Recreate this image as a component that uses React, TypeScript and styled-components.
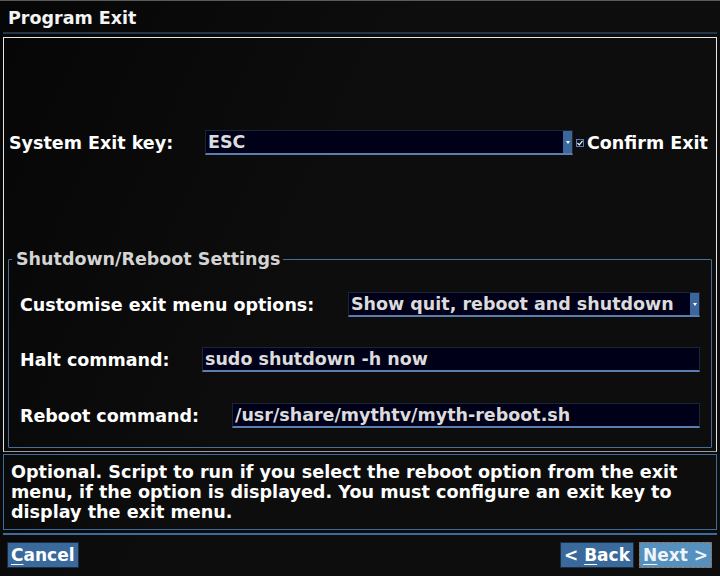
import React from 'react'
import styled, { createGlobalStyle } from 'styled-components'

const GlobalStyle = createGlobalStyle`
  html, body {
    margin: 0;
    padding: 0;
    background: #0b0b0b;
  }
  * {
    box-sizing: border-box;
  }
`

const Screen = styled.div`
  width: 720px;
  height: 576px;
  overflow: hidden;
  display: flex;
  flex-direction: column;
  border-top: 1px solid #5a5a5a;
  background:
    linear-gradient(115deg, rgba(0, 0, 0, 0.55) 0%, rgba(0, 0, 0, 0) 45%),
    #0d0d0d;
  font-family: 'DejaVu Sans', 'Liberation Sans', sans-serif;
  font-weight: bold;
  color: #ffffff;
`

const TitleBar = styled.div`
  height: 33px;
  margin: 0 3px;
  padding: 5px 0 0 5px;
  font-size: 17.5px;
  line-height: 24px;
  color: #f4f4f4;
  border-bottom: 2px solid #22364a;
`

const MainPanel = styled.div`
  margin: 3px 3px 0 3px;
  height: 415px;
  border: 1px solid #e6e6e6;
  border-bottom-color: #9a9a9a;
  display: flex;
  flex-direction: column;
  padding: 92px 4px 3px 4px;
`

const TopRow = styled.div`
  display: flex;
  align-items: center;
  height: 25px;
  padding-left: 1px;
`

const Label = styled.div<{ $width: number }>`
  width: ${({ $width }) => $width}px;
  flex: none;
  font-size: 17.5px;
  color: #ffffff;
  white-space: nowrap;
`

const Field = styled.div<{ $width: number }>`
  width: ${({ $width }) => $width}px;
  height: 25px;
  flex: none;
  display: flex;
  align-items: center;
  background: #000018;
  border: 1px solid #1a2638;
  border-bottom: 2px solid #5a7fae;
  color: #dcdcdc;
  font-size: 17.5px;
  padding-left: 2px;
  white-space: nowrap;
  overflow: hidden;
`

const FieldText = styled.span`
  flex: 1;
`

const DropArrow = styled.span`
  width: 9px;
  align-self: stretch;
  background: #3c679c;
  display: flex;
  align-items: center;
  justify-content: center;
  &::after {
    content: '';
    border-left: 2.5px solid transparent;
    border-right: 2.5px solid transparent;
    border-top: 3px solid #ffffff;
  }
`

const CheckWrap = styled.div`
  display: flex;
  align-items: center;
  margin-left: 3px;
  gap: 3px;
  font-size: 17.5px;
  color: #ffffff;
`

const CheckBox = styled.span`
  width: 8px;
  height: 8px;
  border: 1px solid #5a7fae;
  background: #0a1020;
  display: flex;
  align-items: center;
  justify-content: center;
`

const GroupBox = styled.fieldset`
  margin: 94px 0 0 0;
  padding: 23px 0 0 11px;
  height: 200px;
  border: 1px solid #4a6e98;
  border-radius: 1px;
  min-width: 0;
`

const Legend = styled.legend`
  padding: 0 3px 0 4px;
  margin-left: -8px;
  font-size: 17.5px;
  color: #d4d4d4;
`

const GroupRow = styled.div<{ $gap: number }>`
  display: flex;
  align-items: center;
  height: 25px;
  margin-top: ${({ $gap }) => $gap}px;
`

const HelpBox = styled.div`
  margin: 2px 3px 0 3px;
  height: 76px;
  border: 1px solid #3e6a9c;
  padding: 7px 0 0 7px;
  font-size: 17.6px;
  line-height: 20px;
  color: #ffffff;
`

const ButtonBar = styled.div`
  margin: 3px 3px 0 3px;
  border-top: 2px solid #3e6a9c;
  padding: 7px 5px 0 4px;
  display: flex;
  align-items: center;
  gap: 5px;
`

const Button = styled.div<{ $focused?: boolean }>`
  height: 26px;
  padding: 0 3px;
  display: flex;
  align-items: center;
  font-size: 17px;
  background: ${({ $focused }) => ($focused ? '#5590bf' : '#3a6a9c')};
  color: ${({ $focused }) => ($focused ? '#eef4fb' : '#ffffff')};
  border: 1px ${({ $focused }) => ($focused ? 'dashed #9a6a48' : 'solid #1c2c40')};
  white-space: nowrap;
`

const Spacer = styled.div`
  flex: 1;
`

const Key = styled.span`
  text-decoration: underline;
  text-underline-offset: 3px;
`

export default function App() {
  return (
    <>
      <GlobalStyle />
      <Screen>
        <TitleBar>Program Exit</TitleBar>
        <MainPanel>
          <TopRow>
            <Label $width={196}>System Exit key:</Label>
            <Field $width={368}>
              <FieldText>ESC</FieldText>
              <DropArrow />
            </Field>
            <CheckWrap>
              <CheckBox>
                <svg width="6" height="6" viewBox="0 0 6 6">
                  <path d="M0.5 3 L2.3 4.8 L5.5 0.8" stroke="#ffffff" strokeWidth="1.2" fill="none" />
                </svg>
              </CheckBox>
              Confirm Exit
            </CheckWrap>
          </TopRow>
          <GroupBox>
            <Legend>Shutdown/Reboot Settings</Legend>
            <GroupRow $gap={0}>
              <Label $width={328}>Customise exit menu options:</Label>
              <Field $width={352}>
                <FieldText>Show quit, reboot and shutdown</FieldText>
                <DropArrow />
              </Field>
            </GroupRow>
            <GroupRow $gap={30}>
              <Label $width={182}>Halt command:</Label>
              <Field $width={498}>
                <FieldText>sudo shutdown -h now</FieldText>
              </Field>
            </GroupRow>
            <GroupRow $gap={31}>
              <Label $width={212}>Reboot command:</Label>
              <Field $width={468}>
                <FieldText>/usr/share/mythtv/myth-reboot.sh</FieldText>
              </Field>
            </GroupRow>
          </GroupBox>
        </MainPanel>
        <HelpBox>
          Optional. Script to run if you select the reboot option from the exit menu, if the option is
          displayed. You must configure an exit key to display the exit menu.
        </HelpBox>
        <ButtonBar>
          <Button>
            <Key>C</Key>ancel
          </Button>
          <Spacer />
          <Button>
            &lt;&nbsp;<Key>B</Key>ack
          </Button>
          <Button $focused>
            <Key>N</Key>ext &gt;
          </Button>
        </ButtonBar>
      </Screen>
    </>
  )
}
